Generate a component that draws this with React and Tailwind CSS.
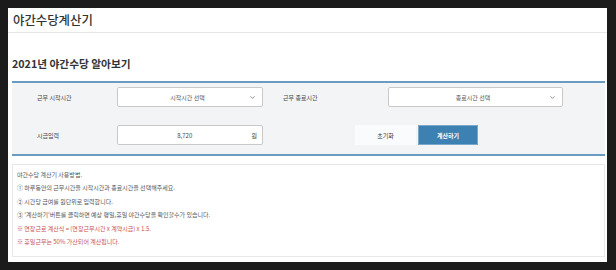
import { ChevronDown } from "lucide-react";

const font = "font-['Noto_Sans_CJK_KR','Noto_Sans',sans-serif]";

const SelectBox = ({ placeholder, className }) => (
  <div
    className={`flex h-[20px] items-center rounded-[2px] border border-[#c9c9c9] bg-white pl-[8px] pr-[6px] ${className}`}
  >
    <span className="flex-1 text-center text-[6px] text-[#555]">{placeholder}</span>
    <ChevronDown className="h-[7px] w-[7px] text-[#666]" strokeWidth={2.5} />
  </div>
);

const notes = [
  { text: "야간수당 계산기 사용방법.", red: false },
  { text: "① 하루동안의 근무시간을 시작시간과 종료시간을 선택해주세요.", red: false },
  { text: "② 시간당 급여를 원단위로 입력합니다.", red: false },
  { text: "③ '계산하기'버튼를 클릭하면 예상 평일,휴일 야간수당을 확인할수가 있습니다.", red: false },
  { text: "※ 연장근로 계산식 = (연장근무시간 x 계약시급) x 1.5.", red: true },
  { text: "※ 휴일근무는 50% 가산되어 계산됩니다.", red: true },
];

export default function App() {
  return (
    <div className={`h-[270px] w-[616px] bg-[#1b1b1b] pt-[8px] pl-[8px] ${font}`}>
      <div className="h-[254px] w-[599px] bg-white">
        {/* Header */}
        <div className="flex h-[25px] items-center border-b border-[#e6e6e6] pl-[5px]">
          <h1 className="text-[12.4px] font-medium leading-none text-[#333]">야간수당계산기</h1>
        </div>

        <div className="ml-[4px] mr-[2px]">
          <h2 className="pt-[25px] pb-[12px] text-[10.7px] font-bold leading-[11px] text-[#333]">
            2021년 야간수당 알아보기
          </h2>

          {/* Form */}
          <div className="border-y-2 border-[#6a9bc3] bg-[#f3f4f6] pt-[4px] pb-[9px] pl-[25px]">
            <div className="flex items-center">
              <span className="w-[80px] text-[6px] text-[#444]">근무 시작시간</span>
              <SelectBox placeholder="시작시간 선택" className="w-[146px]" />
              <span className="ml-[20px] w-[105px] text-[6px] text-[#444]">근무 종료시간</span>
              <SelectBox placeholder="종료시간 선택" className="w-[175px]" />
            </div>
            <div className="mt-[18px] flex items-center">
              <span className="w-[80px] text-[6px] text-[#444]">시급입력</span>
              <div className="flex h-[20px] w-[146px] items-center rounded-[2px] border border-[#c9c9c9] bg-white pr-[5px]">
                <span className="flex-1 text-center text-[6px] text-[#444]">8,720</span>
                <span className="text-[6px] text-[#444]">원</span>
              </div>
              <div className="ml-[92px] flex gap-[2px]">
                <button className="h-[20px] w-[61px] bg-[#fafbfc] text-[6px] text-[#333]">초기화</button>
                <button className="h-[20px] w-[60px] border border-[#7aa8cc] bg-[#3d80b2] text-[6px] font-bold text-white">
                  계산하기
                </button>
              </div>
            </div>
          </div>

          {/* Notes */}
          <div className="mt-[8px] border border-[#e8e8e8] pt-[3px] pb-[8px] pl-[4px]">
            {notes.map((n, i) => (
              <p
                key={i}
                className={`text-[6px] leading-[13.4px] ${n.red ? "text-[#c9504f]" : "text-[#555]"}`}
              >
                {n.text}
              </p>
            ))}
          </div>
        </div>
      </div>
    </div>
  );
}
